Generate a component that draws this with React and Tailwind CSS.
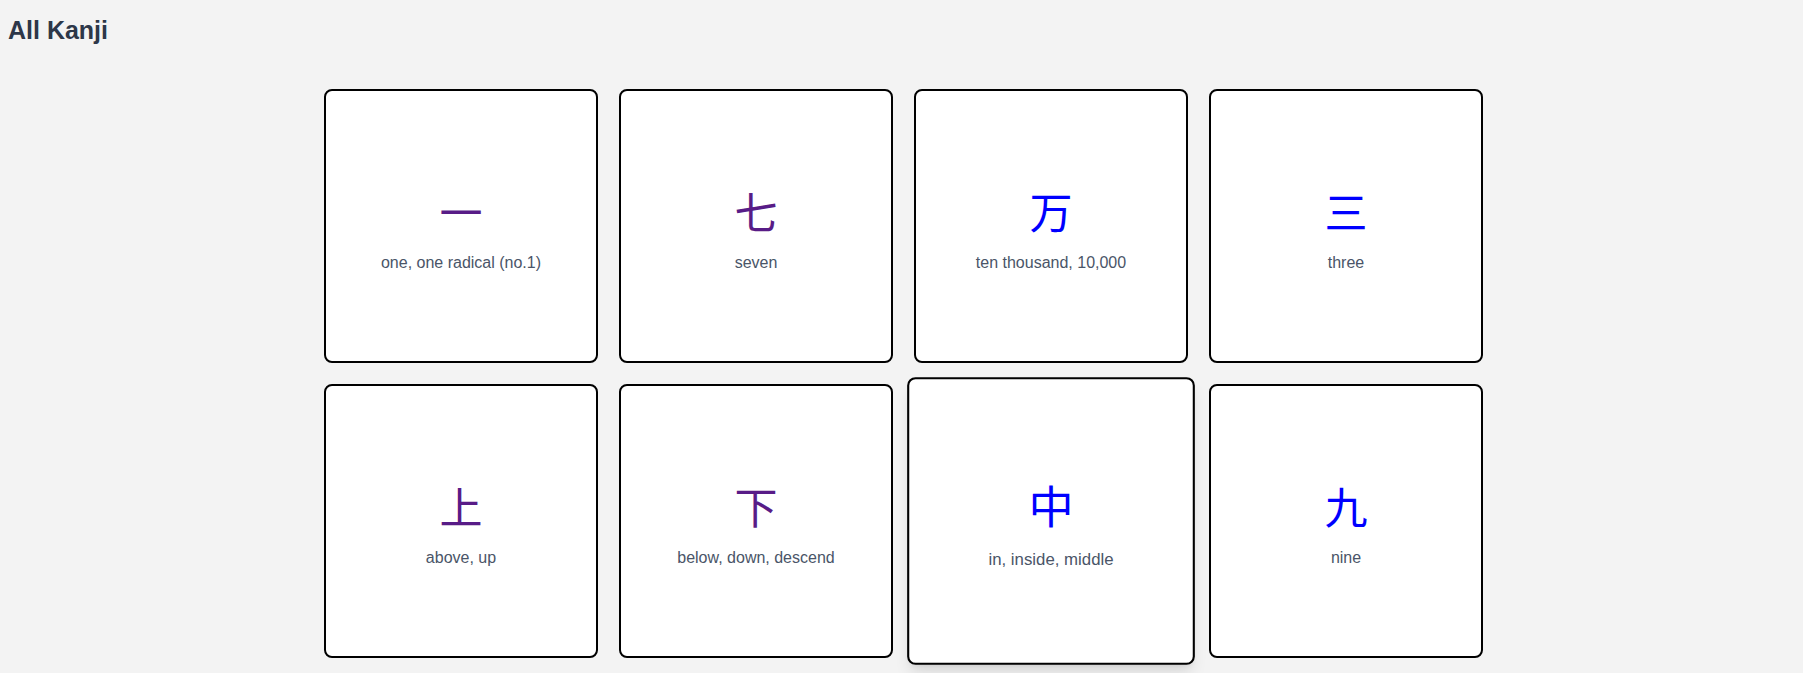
import React from "react";

const kanji = [
  { k: "一", m: "one, one radical (no.1)", c: "text-[#581c87]" },
  { k: "七", m: "seven", c: "text-[#581c87]" },
  { k: "万", m: "ten thousand, 10,000", c: "text-[#0000ff]" },
  { k: "三", m: "three", c: "text-[#0000ff]" },
  { k: "上", m: "above, up", c: "text-[#581c87]" },
  { k: "下", m: "below, down, descend", c: "text-[#581c87]" },
  { k: "中", m: "in, inside, middle", c: "text-[#0000ff]", hover: true },
  { k: "九", m: "nine", c: "text-[#0000ff]" },
];

export default function App() {
  return (
    <div className="min-h-[673px] bg-[#f3f3f3] font-['Liberation_Sans',Arial,sans-serif]">
      <h1 className="px-2 pt-[14px] text-[25px] leading-8 font-bold text-[#2d3748]">All Kanji</h1>
      <div className="mt-[43px] grid grid-cols-[repeat(4,274px)] justify-center gap-[21px] pl-[4px]">
        {kanji.map((item) => (
          <div
            key={item.k}
            className={`flex h-[274px] w-[274px] flex-col items-center rounded-lg border-2 border-black bg-white pt-[95px] ${
              item.hover ? "scale-105 shadow-lg" : ""
            }`}
          >
            <div className={`text-[43px] leading-[48px] font-['Noto_Sans_CJK_JP',sans-serif] ${item.c}`}>{item.k}</div>
            <div className="mt-[17px] text-base leading-6 text-[#4a5568]">{item.m}</div>
          </div>
        ))}
      </div>
    </div>
  );
}
